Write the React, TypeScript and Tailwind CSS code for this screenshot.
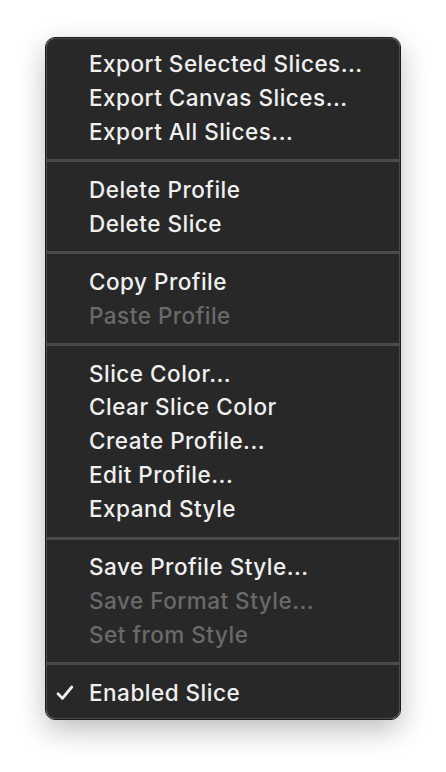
import React from 'react';

type Item = { label: string; disabled?: boolean; checked?: boolean };

const groups: Item[][] = [
  [
    { label: 'Export Selected Slices...' },
    { label: 'Export Canvas Slices...' },
    { label: 'Export All Slices...' },
  ],
  [{ label: 'Delete Profile' }, { label: 'Delete Slice' }],
  [{ label: 'Copy Profile' }, { label: 'Paste Profile', disabled: true }],
  [
    { label: 'Slice Color...' },
    { label: 'Clear Slice Color' },
    { label: 'Create Profile...' },
    { label: 'Edit Profile...' },
    { label: 'Expand Style' },
  ],
  [
    { label: 'Save Profile Style...' },
    { label: 'Save Format Style...', disabled: true },
    { label: 'Set from Style', disabled: true },
  ],
  [{ label: 'Enabled Slice', checked: true }],
];

const MenuRow = ({ item }: { item: Item }) => (
  <div
    className={`relative h-[33.9px] flex items-center pl-[42px] text-[22.5px] font-medium tracking-[0.5px] ${
      item.disabled ? 'text-[#6a6a6a]' : 'text-[#f0f0f0]'
    }`}
  >
    {item.checked && (
      <svg
        className="absolute left-[9px] top-[9px]"
        width="18"
        height="16"
        viewBox="0 0 18 16"
        fill="none"
      >
        <path
          d="M2 8.8 L6.4 13.4 L15.8 2"
          stroke="#f0f0f0"
          strokeWidth="2.8"
          strokeLinecap="round"
          strokeLinejoin="round"
        />
      </svg>
    )}
    {item.label}
  </div>
);

export default function App() {
  return (
    <div className="w-[446px] h-[772px] bg-white pt-[38px] pl-[46px]">
      <div
        className="w-[354px] rounded-[9px] bg-[#282828] border border-[#4a4a4a] outline outline-1 outline-[#1a1a1a] py-[8px] shadow-[0_10px_30px_rgba(0,0,0,0.28)]"
        style={{ fontFamily: '"Inter", "Liberation Sans", sans-serif' }}
      >
        {groups.map((group, gi) => (
          <div key={gi}>
            {gi > 0 && (
              <div className="h-[24.1px] flex items-center">
                <div className="h-[3px] w-full bg-[#4b4b4b]" />
              </div>
            )}
            {group.map((item) => (
              <MenuRow key={item.label} item={item} />
            ))}
          </div>
        ))}
      </div>
    </div>
  );
}
